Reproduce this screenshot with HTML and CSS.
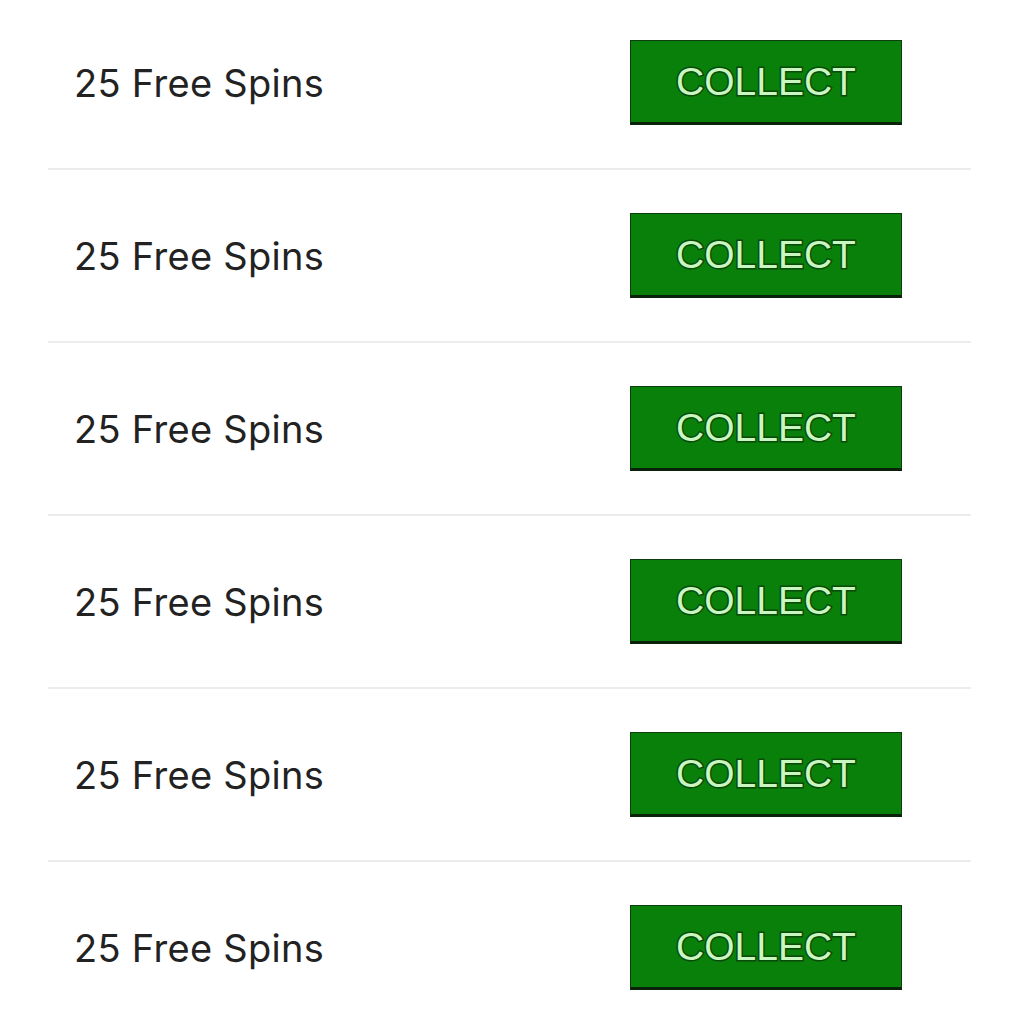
FILE: index.html
```html
<!DOCTYPE html>
<html lang="en">
<head>
    <meta charset="UTF-8">
    <title>Free Spins</title>
    <link rel="stylesheet" href="styles.css">
</head>
<body>
    <div class="offers">
        <div class="offer">
            <span class="offer-name">25 Free Spins</span>
            <button class="collect">COLLECT</button>
        </div>
        <div class="offer">
            <span class="offer-name">25 Free Spins</span>
            <button class="collect">COLLECT</button>
        </div>
        <div class="offer">
            <span class="offer-name">25 Free Spins</span>
            <button class="collect">COLLECT</button>
        </div>
        <div class="offer">
            <span class="offer-name">25 Free Spins</span>
            <button class="collect">COLLECT</button>
        </div>
        <div class="offer">
            <span class="offer-name">25 Free Spins</span>
            <button class="collect">COLLECT</button>
        </div>
        <div class="offer">
            <span class="offer-name">25 Free Spins</span>
            <button class="collect">COLLECT</button>
        </div>
    </div>
</body>
</html>
```

FILE: styles.css
```css
body {
    margin: 0;
    background-color: #ffffff;
    font-family: Inter, "Noto Sans", sans-serif;
    overflow: hidden;
}
.offers {
    margin: -3px 61px 0 48px;
}
.offer {
    display: flex;
    align-items: center;
    justify-content: space-between;
    height: 171px;
    border-bottom: 2px solid #ececec;
    padding: 0 69px 0 26px;
}
.offer:last-child {
    border-bottom: none;
}
.offer-name {
    font-size: 38px;
    color: #222222;
    letter-spacing: 0.3px;
}
.collect {
    width: 272px;
    height: 85px;
    background-color: #098009;
    border: 1px solid #0c3d0c;
    border-bottom: 3px solid #0a220a;
    font-family: "Liberation Sans", Arial, sans-serif;
    font-size: 39px;
    color: #c9f7c0;
    padding: 1px 0 0;
    -webkit-text-stroke: 3px #0a4a0a;
    paint-order: stroke fill;
}
```
